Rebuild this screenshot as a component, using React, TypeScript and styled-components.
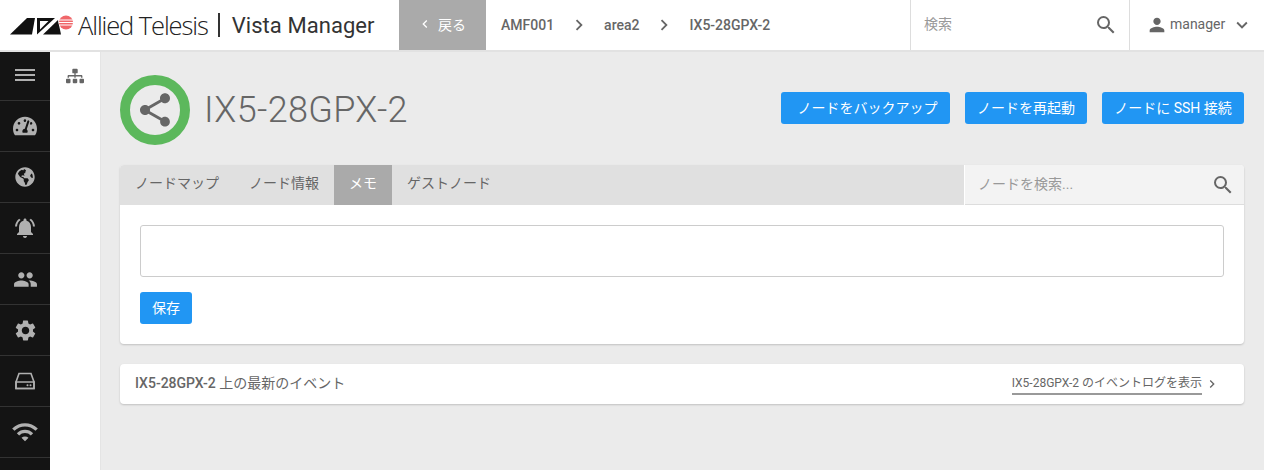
import React from 'react';
import styled, { createGlobalStyle } from 'styled-components';
import {
  MdKeyboardArrowDown,
  MdKeyboardArrowLeft,
  MdKeyboardArrowRight,
  MdNotificationsActive,
  MdPeople,
  MdPerson,
  MdSearch,
  MdSettings,
  MdShare,
  MdWifi,
} from 'react-icons/md';
import { FaGlobeAmericas, FaSitemap, FaTachometerAlt } from 'react-icons/fa';

const GlobalStyle = createGlobalStyle`
  html, body {
    margin: 0;
    padding: 0;
    height: 100%;
    overflow: hidden;
    background: #ebebeb;
    font-family: Roboto, "Noto Sans CJK JP", sans-serif;
  }
  * { box-sizing: border-box; }
`;

const Page = styled.div`
  width: 1264px;
  height: 470px;
  overflow: hidden;
  display: flex;
  flex-direction: column;
`;

const TopBar = styled.header`
  height: 52px;
  flex-shrink: 0;
  display: flex;
  background: #fff;
  border-bottom: 2px solid #e2e2e2;
  position: relative;
  z-index: 2;
`;

const Brand = styled.div`
  width: 399px;
  display: flex;
  align-items: center;
  padding-left: 10px;
`;

const BrandName = styled.span`
  font-family: "Open Sans", sans-serif;
  font-weight: 300;
  font-size: 25.5px;
  letter-spacing: -1.1px;
  color: #222;
  margin-left: 5px;
  white-space: nowrap;
`;

const BrandDivider = styled.span`
  width: 2px;
  height: 24px;
  background: #333;
  margin: 0 12px 0 10px;
`;

const ProductName = styled.span`
  font-size: 22px;
  color: #333;
  letter-spacing: 0.06px;
  white-space: nowrap;
`;

const BackButton = styled.button`
  width: 87px;
  height: 50px;
  border: 0;
  padding: 0 0 2px 18px;
  background: #aaa;
  color: #fff;
  display: flex;
  align-items: center;
  gap: 5px;
  font: inherit;
  font-size: 14px;
`;

const Crumbs = styled.nav`
  flex: 1;
  height: 50px;
  display: flex;
  align-items: center;
  padding-left: 15px;
  font-size: 14px;
  font-weight: 500;
  color: #666;
`;

const CrumbArrow = styled.span`
  display: flex;
  width: 50px;
  justify-content: center;
  color: #666;
`;

const TopSearch = styled.div`
  width: 219px;
  height: 50px;
  border-left: 1px solid #ddd;
  display: flex;
  align-items: center;
  justify-content: space-between;
  padding: 0 11px 0 13px;
  font-size: 14px;
  color: #999;
  background: #fff;
`;

const TopSearchLabel = styled.span`
  margin-bottom: 4px;
`;

const UserMenu = styled.div`
  width: 135px;
  height: 50px;
  border-left: 1px solid #ddd;
  display: flex;
  align-items: center;
  padding-left: 16px;
  font-size: 14px;
  color: #666;
  gap: 2px;
`;

const UserName = styled.span`
  margin-bottom: 2px;
  margin-right: 4px;
`;

const Body = styled.div`
  flex: 1;
  display: flex;
  min-height: 0;
  margin-top: -2px;
`;

const SideNav = styled.nav`
  width: 50px;
  flex-shrink: 0;
  background: #141414;
`;

const SideItem = styled.div`
  height: 51px;
  border-bottom: 1px solid #333;
  display: flex;
  align-items: center;
  justify-content: center;
  color: #b0b0b0;
`;

const SubNav = styled.div`
  width: 51px;
  flex-shrink: 0;
  background: #fff;
  border-right: 1px solid #e4e4e4;
  display: flex;
  justify-content: center;
  padding-top: 17px;
  color: #666;
`;

const Main = styled.main`
  flex: 1;
  padding: 25px 20px 0 19px;
  background: #ebebeb;
`;

const TitleRow = styled.div`
  display: flex;
  align-items: center;
  height: 70px;
  margin-bottom: 20px;
`;

const StatusRing = styled.div`
  width: 70px;
  height: 70px;
  border-radius: 50%;
  border: 10px solid #5cb85c;
  display: flex;
  align-items: center;
  justify-content: center;
  color: #666;
`;

const NodeTitle = styled.h1`
  margin: 0 0 0 14px;
  font-size: 36px;
  font-weight: 300;
  letter-spacing: 0.36px;
  color: #666;
  flex: 1;
`;

const Actions = styled.div`
  display: flex;
  gap: 15px;
  margin-bottom: 4px;
`;

const ActionButton = styled.button<{ $width: number }>`
  width: ${p => p.$width}px;
  height: 32px;
  border: 0;
  border-radius: 3px;
  background: #2196f3;
  color: #fff;
  font: inherit;
  font-size: 14px;
  padding: 0 0 3px;
  white-space: nowrap;
`;

const BackupButton = styled(ActionButton)`
  padding-left: 4px;
`;

const Card = styled.section`
  background: #fff;
  border-radius: 4px;
  box-shadow: 0 1px 2px rgba(0, 0, 0, 0.18);
  margin-bottom: 20px;
  overflow: hidden;
`;

const TabBar = styled.div`
  height: 40px;
  display: flex;
`;

const Tabs = styled.div`
  flex: 1;
  display: flex;
  background: #e0e0e0;
`;

const Tab = styled.div<{ $active?: boolean }>`
  padding: 0 15px;
  line-height: 36px;
  font-size: 14px;
  white-space: nowrap;
  color: ${p => (p.$active ? '#fff' : '#666')};
  background: ${p => (p.$active ? '#aaa' : 'transparent')};
`;

const NodeSearch = styled.div`
  width: 279px;
  margin-left: 1px;
  background: #f3f3f3;
  border-bottom: 1px solid #ddd;
  display: flex;
  align-items: center;
  justify-content: space-between;
  padding: 0 5px 0 13px;
  font-size: 14px;
  color: #999;
`;

const NodeSearchLabel = styled.span`
  margin-bottom: 4px;
`;

const NodeSearchIcon = styled.span`
  display: flex;
  width: 28px;
  color: #666;
`;

const MemoForm = styled.div`
  padding: 20px;
`;

const MemoInput = styled.div`
  height: 52px;
  border: 1px solid #ccc;
  border-radius: 3px;
  background: #fff;
  margin-bottom: 15px;
`;

const EventsHead = styled.div`
  height: 40px;
  display: flex;
  align-items: center;
  justify-content: space-between;
  padding: 0 24px 0 15px;
  font-size: 14px;
  color: #666;
`;

const EventsTitle = styled.div`
  margin-bottom: 4px;

  strong {
    font-weight: 500;
  }
`;

const LogLink = styled.div`
  display: flex;
  align-items: center;
  gap: 2px;
  font-size: 12px;
  color: #666;
`;

const LogLinkText = styled.span`
  border-bottom: 2px solid #999;
  line-height: 19px;
`;

function LogoMark() {
  return (
    <svg width="63" height="20" viewBox="0 0 63 20">
      <path fill="#111" d="M0 19.5 L17 3 H25 L22 19.5 Z" />
      <path fill="#111" fillRule="evenodd" d="M27 3 H45 L27 19.5 Z M30 6 V14.5 L38.5 6 Z" />
      <path fill="#111" d="M33 19.5 L48 5 L51 19.5 Z" />
      <circle cx="56" cy="7.5" r="7.5" fill="#fff" />
      <circle cx="56" cy="7.5" r="7" fill="#f0676a" />
      <path stroke="#fff" strokeWidth="1" d="M49 5 H63 M49 7.5 H63 M49 10 H63" />
    </svg>
  );
}

function DriveIcon() {
  return (
    <svg width="20" height="18" viewBox="0 0 20 18" fill="none">
      <path d="M1 10 L4 1.5 H16 L19 10 V16.5 H1 Z" stroke="#b0b0b0" strokeWidth="1.6" />
      <path d="M1 10 H19 V16.5 H1 Z" stroke="#b0b0b0" strokeWidth="1.6" />
      <circle cx="12.5" cy="13.2" r="1" fill="#b0b0b0" />
      <circle cx="15.5" cy="13.2" r="1" fill="#b0b0b0" />
    </svg>
  );
}

function MenuIcon() {
  return (
    <svg width="20" height="12" viewBox="0 0 20 12" fill="#b0b0b0">
      <rect width="20" height="2" />
      <rect y="5" width="20" height="2" />
      <rect y="10" width="20" height="2" />
    </svg>
  );
}

export default function App() {
  return (
    <Page>
      <GlobalStyle />
      <TopBar>
        <Brand>
          <LogoMark />
          <BrandName>Allied Telesis</BrandName>
          <BrandDivider />
          <ProductName>Vista Manager</ProductName>
        </Brand>
        <BackButton>
          <MdKeyboardArrowLeft size={16} />
          戻る
        </BackButton>
        <Crumbs>
          AMF001
          <CrumbArrow><MdKeyboardArrowRight size={22} /></CrumbArrow>
          area2
          <CrumbArrow><MdKeyboardArrowRight size={22} /></CrumbArrow>
          IX5-28GPX-2
        </Crumbs>
        <TopSearch>
          <TopSearchLabel>検索</TopSearchLabel>
          <MdSearch size={24} color="#666" />
        </TopSearch>
        <UserMenu>
          <MdPerson size={22} />
          <UserName>manager</UserName>
          <MdKeyboardArrowDown size={22} />
        </UserMenu>
      </TopBar>
      <Body>
        <SideNav>
          <SideItem><MenuIcon /></SideItem>
          <SideItem><FaTachometerAlt size={24} /></SideItem>
          <SideItem><FaGlobeAmericas size={20} /></SideItem>
          <SideItem><MdNotificationsActive size={24} /></SideItem>
          <SideItem><MdPeople size={25} /></SideItem>
          <SideItem><MdSettings size={25} /></SideItem>
          <SideItem><DriveIcon /></SideItem>
          <SideItem><MdWifi size={28} /></SideItem>
        </SideNav>
        <SubNav>
          <FaSitemap size={18} />
        </SubNav>
        <Main>
          <TitleRow>
            <StatusRing><MdShare size={40} /></StatusRing>
            <NodeTitle>IX5-28GPX-2</NodeTitle>
            <Actions>
              <BackupButton $width={169}>ノードをバックアップ</BackupButton>
              <ActionButton $width={122}>ノードを再起動</ActionButton>
              <ActionButton $width={142}>ノードに SSH 接続</ActionButton>
            </Actions>
          </TitleRow>
          <Card>
            <TabBar>
              <Tabs>
                <Tab>ノードマップ</Tab>
                <Tab>ノード情報</Tab>
                <Tab $active>メモ</Tab>
                <Tab>ゲストノード</Tab>
              </Tabs>
              <NodeSearch>
                <NodeSearchLabel>ノードを検索...</NodeSearchLabel>
                <NodeSearchIcon><MdSearch size={24} /></NodeSearchIcon>
              </NodeSearch>
            </TabBar>
            <MemoForm>
              <MemoInput />
              <ActionButton $width={52}>保存</ActionButton>
            </MemoForm>
          </Card>
          <Card>
            <EventsHead>
              <EventsTitle><strong>IX5-28GPX-2</strong> 上の最新のイベント</EventsTitle>
              <LogLink>
                <LogLinkText>IX5-28GPX-2 のイベントログを表示</LogLinkText>
                <MdKeyboardArrowRight size={16} />
              </LogLink>
            </EventsHead>
          </Card>
        </Main>
      </Body>
    </Page>
  );
}
